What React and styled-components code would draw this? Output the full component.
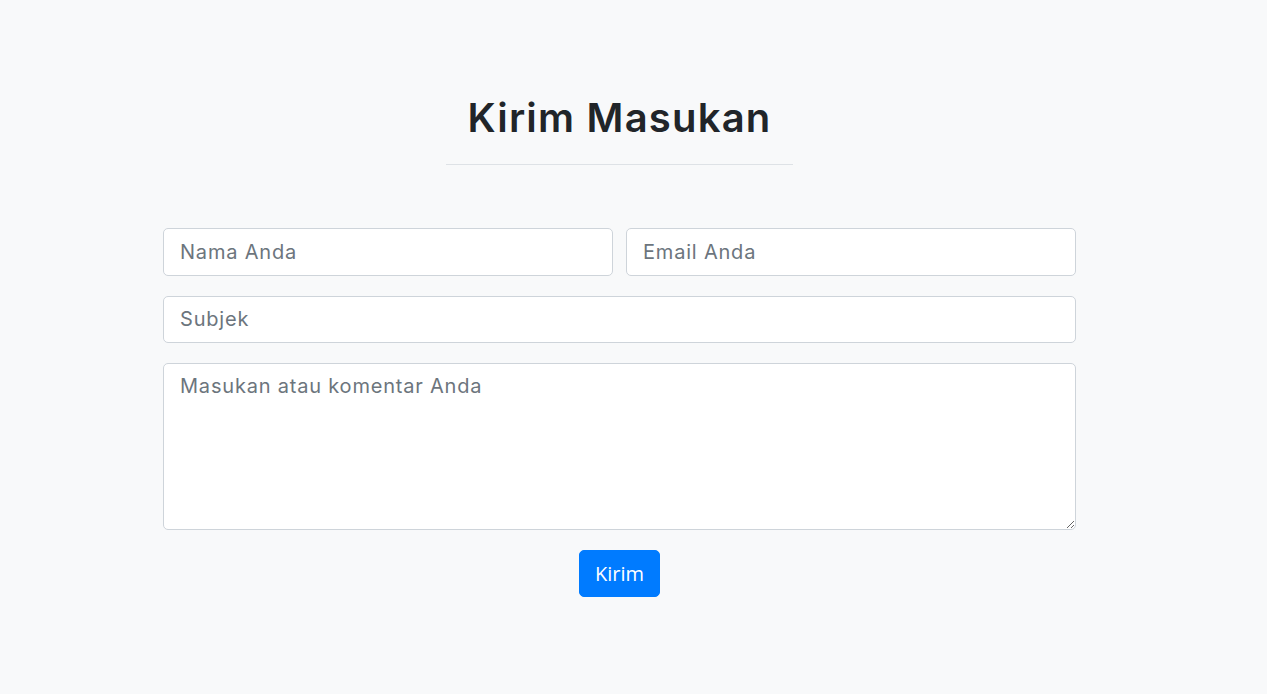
import React from 'react'
import styled, { createGlobalStyle } from 'styled-components'

const Global = createGlobalStyle`
  body {
    margin: 0;
    background: #f8f9fa;
    font-family: Inter, "Noto Sans", sans-serif;
    color: #212529;
  }
`

const Section = styled.section`
  padding: 94px 28px 96px 0;
  display: flex;
  flex-direction: column;
  align-items: center;
`

const Title = styled.h2`
  margin: 0;
  font-size: 40px;
  font-weight: 600;
  line-height: 1.2;
  color: #212529;
  letter-spacing: 1.2px;
`

const Rule = styled.hr`
  width: 347px;
  margin: 22px 0 63px;
  border: 0;
  border-top: 1px solid #dee2e6;
`

const Form = styled.form`
  width: 913px;
  display: flex;
  flex-direction: column;
  gap: 20px;
  align-items: center;
`

const Row = styled.div`
  width: 100%;
  display: grid;
  grid-template-columns: 1fr 1fr;
  gap: 13px;
`

const field = `
  box-sizing: border-box;
  width: 100%;
  padding: 8px 16px;
  font-family: Inter, "Noto Sans", sans-serif;
  font-size: 20px;
  line-height: 29px;
  letter-spacing: 0.8px;
  color: #495057;
  background: #fff;
  border: 1px solid #ced4da;
  border-radius: 5px;
  outline: none;
  &::placeholder {
    color: #6c757d;
  }
`

const Input = styled.input`
  ${field}
  height: 47.5px;
`

const TextArea = styled.textarea`
  ${field}
  display: block;
  height: 167px;
  resize: vertical;
`

const Button = styled.button`
  height: 47px;
  padding: 0 15px;
  font-family: "Open Sans", "Noto Sans", sans-serif;
  font-size: 20px;
  line-height: 1;
  color: #fff;
  background: #007bff;
  border: 1px solid #007bff;
  border-radius: 5px;
  cursor: pointer;
`

export default function App() {
  return (
    <>
      <Global />
      <Section>
        <Title>Kirim Masukan</Title>
        <Rule />
        <Form onSubmit={e => e.preventDefault()}>
          <Row>
            <Input placeholder="Nama Anda" />
            <Input type="email" placeholder="Email Anda" />
          </Row>
          <Input placeholder="Subjek" />
          <TextArea rows={5} placeholder="Masukan atau komentar Anda" />
          <Button type="submit">Kirim</Button>
        </Form>
      </Section>
    </>
  )
}
